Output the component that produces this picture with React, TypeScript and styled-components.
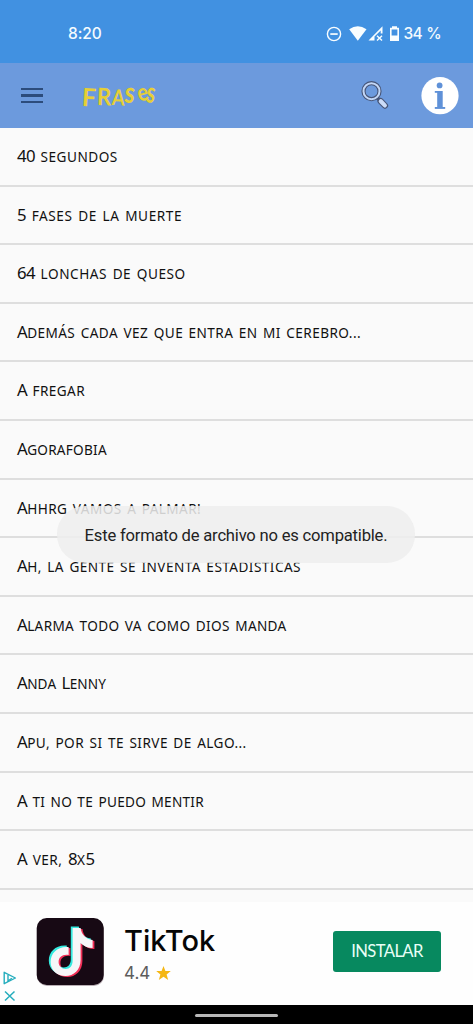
import React from "react";
import styled, { createGlobalStyle } from "styled-components";

const GlobalStyle = createGlobalStyle`
  * { box-sizing: border-box; }
  body { margin: 0; background: #fafafa; overflow: hidden; }
`;

const Screen = styled.div`
  position: relative;
  width: 473px;
  height: 1024px;
  display: flex;
  flex-direction: column;
  background: #fafafa;
  overflow: hidden;
`;

const StatusBar = styled.div`
  flex: none;
  height: 63px;
  padding: 4px 32px 0 68px;
  display: flex;
  align-items: center;
  justify-content: space-between;
  background: #4191e1;
  color: #f4fbff;
  font: 500 15.5px/20px Inter, sans-serif;
`;

const Clock = styled.span`
  letter-spacing: -0.1px;
`;

const StatusIcons = styled.div`
  display: flex;
  align-items: center;
  svg { display: block; }
`;

const Battery = styled.span`
  margin-left: 3px;
  font-size: 15.5px;
  letter-spacing: -0.75px;
  word-spacing: 1px;
`;

const Toolbar = styled.header`
  flex: none;
  height: 65px;
  padding: 0 14px 0 21px;
  display: flex;
  align-items: center;
  background: #6c9add;
`;

const Menu = styled.div`
  width: 22px;
  height: 16px;
  display: flex;
  flex-direction: column;
  justify-content: space-between;
`;

const MenuLine = styled.span`
  height: 2.4px;
  background: #2c4c7c;
`;

const Brand = styled.div`
  margin-left: 39px;
  flex: 1;
  display: flex;
  color: #e6cf35;
  font-family: Lato, sans-serif;
  font-weight: 700;
  line-height: 24px;
`;

const BrandLetter = styled.span<{ $size: number; $w: number; $y: number; $tilt: number; $squeeze: number }>`
  width: ${(p) => p.$w}px;
  font-size: ${(p) => p.$size}px;
  transform-origin: 0 50%;
  transform: translateY(${(p) => p.$y}px) rotate(${(p) => p.$tilt}deg) scaleX(${(p) => p.$squeeze});
`;

const ToolIcon = styled.svg<{ $gap: number }>`
  display: block;
  margin-right: ${(p) => p.$gap}px;
`;

const List = styled.ul`
  flex: none;
  height: 774px;
  margin: 0;
  padding: 0;
  list-style: none;
  overflow: hidden;
`;

const Item = styled.li<{ $spacing: number }>`
  height: 58.6px;
  padding: 0 17px;
  border-bottom: 2px solid #dedede;
  color: #111;
  font-family: "Noto Sans", sans-serif;
  font-size: 16.8px;
  line-height: 56px;
  white-space: pre;
  word-spacing: 1.5px;
  letter-spacing: ${(p) => p.$spacing}px;
`;

const Capital = styled.span`
  letter-spacing: -0.6px;
`;

const SmallCaps = styled.span`
  font-size: 13.6px;
  text-transform: uppercase;
`;

const Toast = styled.div`
  position: absolute;
  left: 57px;
  top: 506px;
  width: 358px;
  height: 57px;
  border-radius: 28px;
  display: flex;
  align-items: center;
  justify-content: center;
  padding-top: 2px;
  background: rgba(238, 238, 238, 0.86);
  color: #222;
  font: 400 16.6px/20px Roboto, sans-serif;
  letter-spacing: -0.2px;
  white-space: nowrap;
`;

const Ad = styled.section`
  flex: none;
  height: 103px;
  display: flex;
  background: #fefefe;
`;

const AdMarks = styled.div`
  width: 36px;
  padding: 69px 0 0 3px;
  display: flex;
  flex-direction: column;
  gap: 4px;
  svg { display: block; }
`;

const AppIcon = styled.svg`
  display: block;
  margin-top: 15px;
`;

const AdInfo = styled.div`
  flex: 1;
  padding: 21px 0 0 19px;
`;

const AdTitle = styled.div`
  color: #060606;
  font: 500 29px/36px Inter, sans-serif;
`;

const Rating = styled.div`
  display: flex;
  align-items: center;
  gap: 6px;
  margin-top: 3px;
  color: #5c5c5c;
  font: 400 17px/22px Inter, sans-serif;
`;

const Install = styled.button`
  width: 108px;
  height: 41px;
  margin: 29px 32px 0 0;
  padding: 0;
  border: 0;
  border-radius: 3px;
  background: #07895f;
  color: #e9fff6;
  font: 400 16.6px/39px Lato, sans-serif;
  letter-spacing: -0.6px;
`;

const NavBar = styled.div`
  flex: none;
  height: 19px;
  display: flex;
  align-items: center;
  justify-content: center;
  background: #000;
`;

const Handle = styled.span`
  width: 83px;
  height: 2.6px;
  border-radius: 2px;
  margin-top: 2px;
  background: #b8b8b8;
`;

const phrases: [string, number][] = [
  ["40 segundos", 0.5],
  ["5 fases de la muerte", 0.6],
  ["64 lonchas de queso", 0.55],
  ["Además cada vez que entra en mi cerebro...", 0.43],
  ["A fregar", 0.4],
  ["Agorafobia", 0.25],
  ["Ahhrg vamos a palmar!", 0.43],
  ["Ah, la gente se inventa estadisticas", 0.45],
  ["Alarma todo va como dios manda", 0.35],
  ["Anda Lenny", 0.15],
  ["Apu, por si te sirve de algo...", 0.44],
  ["A ti no te puedo mentir", 0.29],
  ["A ver, 8x5", 0.5],
];

const brand: [string, number, number, number, number, number][] = [
  ["F", 25, 15, 0, 3, 1],
  ["R", 24, 15, 0, 2, 0.92],
  ["A", 22, 13, 1, 3, 0.84],
  ["s", 29, 12, -5, 8, 0.8],
  ["e", 24, 10, -3, -14, 0.84],
  ["s", 29, 10, -5, 8, 0.68],
];

const notePath =
  "M35 9H43C44 16 48 20 55 21V29C50 29 46 27 43 24V41C43 51 36 57 28 57C19 57 13 51 13 43C13 34 20 27 31 28V36C25 35 21 38 21 43C21 47 24 50 28 50C32 50 35 47 35 42Z";

function Phrase({ text }: { text: string }) {
  const parts = text.match(/[A-Z0-9]+|[^A-Z0-9]+/g) ?? [];
  return (
    <>
      {parts.map((part, i) =>
        /[A-Z0-9]/.test(part) ? (
          <Capital key={i}>{part}</Capital>
        ) : (
          <SmallCaps key={i}>{part}</SmallCaps>
        ),
      )}
    </>
  );
}

export default function App() {
  return (
    <Screen>
      <GlobalStyle />
      <StatusBar>
        <Clock>8:20</Clock>
        <StatusIcons>
          <svg width="78" height="18" viewBox="0 0 78 18" fill="#f8fdff">
            <circle cx="11" cy="9" r="6.6" fill="none" stroke="#f8fdff" strokeWidth="1.4" />
            <path d="M7.3 8.2H14.7V9.9H7.3Z" />
            <path d="M26.2 4.2Q34.8-1.5 43.5 4.2L34.8 15.8Z" />
            <path
              fillRule="evenodd"
              d="M45.5 15.6L59.5 1.3V8.4H57.7V5.4L51.5 11.6V15.6Z"
            />
            <path d="M54 10.7L59 15.6M59 10.7L54 15.6" stroke="#f8fdff" strokeWidth="1.4" />
            <path
              fillRule="evenodd"
              d="M69 1.2H74V2.8H76V16H67V2.8H69ZM68.6 4.5V10.6H74.4V4.5Z"
            />
          </svg>
          <Battery>34 %</Battery>
        </StatusIcons>
      </StatusBar>
      <Toolbar>
        <Menu>
          <MenuLine />
          <MenuLine />
          <MenuLine />
        </Menu>
        <Brand>
          {brand.map(([letter, size, w, y, tilt, squeeze], i) => (
            <BrandLetter key={i} $size={size} $w={w} $y={y} $tilt={tilt} $squeeze={squeeze}>
              {letter}
            </BrandLetter>
          ))}
        </Brand>
        <ToolIcon $gap={31} width="30" height="30" viewBox="0 0 30 30" fill="none">
          <path d="M17.5 17L21 20.5" stroke="#475577" strokeWidth="3.4" />
          <path d="M20.5 20L25 24.6" stroke="#475577" strokeWidth="6.2" strokeLinecap="round" />
          <path d="M20.8 20.3L24.8 24.4" stroke="#cbdcf8" strokeWidth="4.2" strokeLinecap="round" />
          <circle cx="11.5" cy="10.2" r="8" stroke="#475577" strokeWidth="4.2" />
          <circle cx="11.5" cy="10.2" r="8" stroke="#c3d7f6" strokeWidth="2" />
        </ToolIcon>
        <ToolIcon $gap={0} width="38" height="38" viewBox="0 0 38 38">
          <circle cx="19" cy="18.7" r="18.6" fill="#fff" />
          <g fill="#5f91d8">
            <circle cx="18.6" cy="8.4" r="2.9" />
            <rect x="16.2" y="14" width="5.5" height="17" />
            <rect x="13.8" y="14" width="4" height="1.8" />
            <rect x="13.8" y="30" width="10.4" height="1.9" />
          </g>
        </ToolIcon>
      </Toolbar>
      <List>
        {phrases.map(([text, spacing]) => (
          <Item key={text} $spacing={spacing}>
            <Phrase text={text} />
          </Item>
        ))}
      </List>
      <Ad>
        <AdMarks>
          <svg width="14" height="14" viewBox="0 0 14 14" fill="none" stroke="#25adbd" strokeWidth="1.4">
            <path d="M1.2 1.3L12.4 7L1.2 12.7Z" strokeLinejoin="round" />
            <path d="M5 4V10L8.8 7.3" />
          </svg>
          <svg width="14" height="14" viewBox="0 0 14 14" stroke="#25adbd" strokeWidth="1.5">
            <path d="M2 2.5L11.5 11.5M11.5 2.5L2 11.5" />
          </svg>
        </AdMarks>
        <AppIcon width="69" height="70" viewBox="0 0 69 70">
          <rect x="1" y="2" width="67" height="67" rx="10" fill="#b9aeb4" />
          <rect x="0.7" y="1" width="67" height="67" rx="10" fill="#170914" />
          <path d={notePath} fill="#f22f57" transform="translate(3.4 3)" />
          <path d={notePath} fill="#35eadf" transform="translate(-0.2 0.6)" />
          <path d={notePath} fill="#f6f6f8" transform="translate(1.6 2)" />
        </AppIcon>
        <AdInfo>
          <AdTitle>TikTok</AdTitle>
          <Rating>
            4.4
            <svg width="15" height="15" viewBox="0 0 15 15">
              <path
                fill="#f5b714"
                d="M7.5 0L9.4 5H14.8L10.6 8.5L12.2 14L7.5 10.8L2.8 14L4.4 8.5L0.2 5H5.6Z"
              />
            </svg>
          </Rating>
        </AdInfo>
        <Install>INSTALAR</Install>
      </Ad>
      <NavBar>
        <Handle />
      </NavBar>
      <Toast>Este formato de archivo no es compatible.</Toast>
    </Screen>
  );
}
